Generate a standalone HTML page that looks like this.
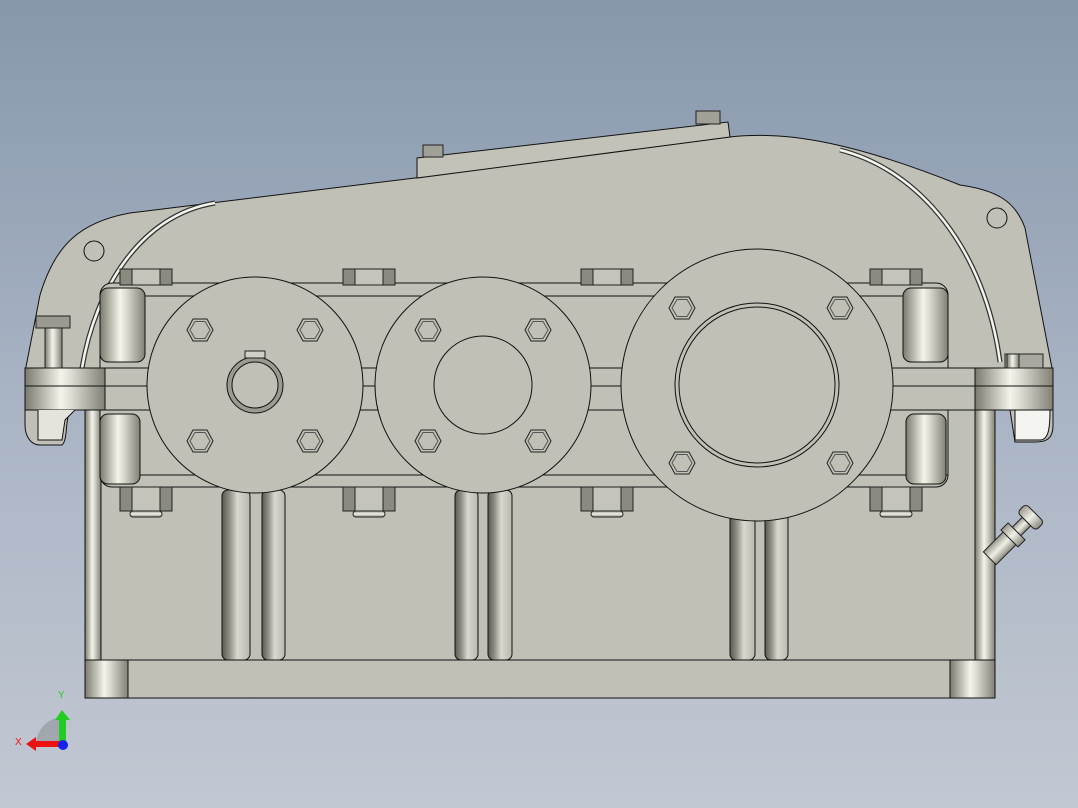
<!DOCTYPE html>
<html><head><style>
html,body{margin:0;padding:0;width:1078px;height:808px;overflow:hidden;background:linear-gradient(#8797ac,#a9b4c4 50%,#c2c8d2);}
svg{position:absolute;left:0;top:0}
</style></head><body>
<svg width="1078" height="808" viewBox="0 0 1078 808" xmlns="http://www.w3.org/2000/svg">
<defs>
<linearGradient id="cyl" x1="0" x2="1" y1="0" y2="0">
<stop offset="0" stop-color="#7a7a6e"/><stop offset=".45" stop-color="#f4f4ea"/><stop offset=".6" stop-color="#d8d8ce"/><stop offset="1" stop-color="#808075"/></linearGradient>
<linearGradient id="cylv" x1="0" x2="0" y1="0" y2="1">
<stop offset="0" stop-color="#9a9a8e"/><stop offset=".5" stop-color="#f0f0e6"/><stop offset="1" stop-color="#8a8a7e"/></linearGradient>
<linearGradient id="slot" x1="0" x2="1"><stop offset="0" stop-color="#5a5a52"/><stop offset=".25" stop-color="#8a8a80"/><stop offset=".55" stop-color="#d8d8ce"/><stop offset="1" stop-color="#b8b8ae"/></linearGradient>
<g id="hex"><polygon points="-13,0 -7,-11 7,-11 13,0 7,11 -7,11" fill="#c0c0b6" stroke="#222" stroke-width="1"/><polygon points="-10,0 -5,-8.5 5,-8.5 10,0 5,8.5 -5,8.5" fill="none" stroke="#555" stroke-width="1"/></g>
<g id="nutT"><rect x="-26" y="-8" width="52" height="16" fill="#c4c4ba" stroke="#222"/><rect x="-26" y="-8" width="12" height="16" fill="#8a8a80" stroke="#222"/><rect x="14" y="-8" width="12" height="16" fill="#8a8a80" stroke="#222"/></g>
<g id="nutB"><rect x="-26" y="-16" width="52" height="24" fill="#c4c4ba" stroke="#222"/><rect x="-26" y="-16" width="12" height="24" fill="#8a8a80" stroke="#222"/><rect x="14" y="-16" width="12" height="24" fill="#8a8a80" stroke="#222"/><rect x="-16" y="8" width="32" height="6" rx="3" fill="url(#cylv)" stroke="#222"/></g>
</defs>

<!-- lower housing -->
<rect x="85" y="400" width="910" height="298" fill="#c0c0b6" stroke="#111"/>
<rect x="85" y="400" width="16" height="260" fill="url(#cyl)" stroke="#111"/>
<rect x="975" y="400" width="20" height="260" fill="url(#cyl)" stroke="#111"/>
<g stroke="#111">
<rect x="222" y="490" width="28" height="170" rx="6" fill="url(#slot)"/>
<rect x="262" y="490" width="23" height="170" rx="6" fill="url(#slot)"/>
<rect x="455" y="490" width="23" height="170" rx="6" fill="url(#slot)"/>
<rect x="488" y="490" width="24" height="170" rx="6" fill="url(#slot)"/>
<rect x="730" y="490" width="25" height="170" rx="6" fill="url(#slot)"/>
<rect x="765" y="490" width="23" height="170" rx="6" fill="url(#slot)"/>
</g>
<line x1="85" y1="660" x2="995" y2="660" stroke="#111"/>
<rect x="85" y="660" width="43" height="38" fill="url(#cyl)" stroke="#111"/>
<rect x="950" y="660" width="45" height="38" fill="url(#cyl)" stroke="#111"/>

<!-- cover -->
<path d="M25,372 L40,295 C55,245 80,222 130,213 L415,178 L730,137 C790,130 860,145 960,185 C995,190 1015,200 1025,228 L1052,368 Z" fill="#c0c0b6" stroke="#111"/>
<path d="M417,158 L728,122 L730,137 L417,178 Z" fill="#c2c2b8" stroke="#111"/>
<rect x="423" y="145" width="20" height="12" fill="#a0a096" stroke="#222"/>
<rect x="696" y="111" width="24" height="13" fill="#a0a096" stroke="#222"/>
<path d="M82,368 C95,290 140,215 215,203" fill="none" stroke="#333" stroke-width="5"/>
<path d="M82,368 C95,290 140,215 215,203" fill="none" stroke="#f4f4ee" stroke-width="2.5"/>
<path d="M840,150 C920,170 985,250 1000,362" fill="none" stroke="#333" stroke-width="5"/>
<path d="M840,150 C920,170 985,250 1000,362" fill="none" stroke="#f4f4ee" stroke-width="2.5"/>
<circle cx="94" cy="251" r="10" fill="none" stroke="#111"/>
<circle cx="997" cy="218" r="10" fill="none" stroke="#111"/>

<!-- upper box -->
<rect x="100" y="283" width="848" height="204" rx="12" fill="#c0c0b6" stroke="#111"/>
<line x1="100" y1="296" x2="948" y2="296" stroke="#111"/>
<line x1="100" y1="475" x2="948" y2="475" stroke="#111"/>
<rect x="100" y="288" width="45" height="74" rx="8" fill="url(#cyl)" stroke="#111"/>
<rect x="100" y="414" width="40" height="70" rx="8" fill="url(#cyl)" stroke="#111"/>
<rect x="903" y="288" width="45" height="74" rx="8" fill="url(#cyl)" stroke="#111"/>
<rect x="906" y="414" width="40" height="70" rx="8" fill="url(#cyl)" stroke="#111"/>

<!-- flange band -->
<path d="M25,368 L1053,368 L1053,425 C1053,440 1045,442 1035,442 L1015,442 L1010,410 L70,410 C65,420 68,440 62,445 L40,445 C30,445 25,435 25,425 Z" fill="#c0c0b6" stroke="#111"/>
<rect x="25" y="368" width="80" height="42" fill="url(#cyl)" stroke="#111"/>
<rect x="975" y="368" width="78" height="42" fill="url(#cyl)" stroke="#111"/>
<line x1="25" y1="386" x2="1053" y2="386" stroke="#111"/>
<path d="M38,410 L38,440 L62,440 L65,420 L75,410" fill="#e4e4dc" stroke="#111"/>
<path d="M1015,410 L1015,440 L1040,440 C1048,440 1050,430 1050,410 Z" fill="#f4f4f0" stroke="#111"/>
<rect x="36" y="316" width="34" height="12" fill="#9a9a90" stroke="#222"/>
<rect x="45" y="328" width="17" height="40" fill="url(#cyl)" stroke="#222"/>
<rect x="1005" y="354" width="38" height="14" fill="#a8a89e" stroke="#222"/>
<rect x="1007" y="354" width="12" height="14" fill="url(#cyl)" stroke="#222"/>

<!-- nuts -->
<use href="#nutT" x="146" y="277"/><use href="#nutT" x="369" y="277"/><use href="#nutT" x="607" y="277"/><use href="#nutT" x="896" y="277"/>
<use href="#nutB" x="146" y="503"/><use href="#nutB" x="369" y="503"/><use href="#nutB" x="607" y="503"/><use href="#nutB" x="896" y="503"/>

<!-- bearing covers -->
<g fill="#c0c0b6" stroke="#111">
<circle cx="255" cy="385" r="108"/>
<circle cx="483" cy="385" r="108"/>
<circle cx="757" cy="385" r="136"/>
</g>
<circle cx="255" cy="385" r="28" fill="#9a9a90" stroke="#111"/>
<circle cx="255" cy="385" r="23" fill="#c0c0b6" stroke="#111"/>
<rect x="245" y="351" width="20" height="7" fill="#d0d0c6" stroke="#222"/>
<circle cx="483" cy="385" r="49" fill="#c0c0b6" stroke="#111"/>
<circle cx="757" cy="385" r="82" fill="#c0c0b6" stroke="#111"/>
<circle cx="757" cy="385" r="78" fill="none" stroke="#111"/>
<use href="#hex" x="200" y="330"/><use href="#hex" x="310" y="330"/><use href="#hex" x="200" y="441"/><use href="#hex" x="310" y="441"/>
<use href="#hex" x="428" y="330"/><use href="#hex" x="538" y="330"/><use href="#hex" x="428" y="441"/><use href="#hex" x="538" y="441"/>
<use href="#hex" x="682" y="308"/><use href="#hex" x="840" y="308"/><use href="#hex" x="682" y="463"/><use href="#hex" x="840" y="463"/>

<!-- oil plug -->
<g transform="translate(1018,530) rotate(-45)">
<rect x="-40" y="-9" width="30" height="18" fill="url(#cylv)" stroke="#222"/>
<rect x="-12" y="-12" width="10" height="24" fill="url(#cylv)" stroke="#222"/>
<rect x="-2" y="-6" width="14" height="12" fill="url(#cylv)" stroke="#222"/>
<rect x="12" y="-13" width="12" height="26" rx="4" fill="url(#cylv)" stroke="#222"/>
</g>

<!-- triad -->
<path d="M36,745 A28,28 0 0 1 62,717 L62,745 Z" fill="#8f939a" opacity=".6"/>
<rect x="59" y="718" width="7" height="26" fill="#22cc22"/>
<polygon points="55,720 62,710 70,720" fill="#22cc22"/>
<rect x="34" y="741" width="28" height="6" fill="#ee1111"/>
<polygon points="36,737 26,744 36,751" fill="#ee1111"/>
<circle cx="63" cy="745" r="5" fill="#1122ee"/>
<text x="58" y="698" font-family="Liberation Sans,sans-serif" font-size="10" fill="#22cc22">Y</text>
<text x="15" y="745" font-family="Liberation Sans,sans-serif" font-size="10" fill="#ee1111">X</text>
</svg>
</body></html>
